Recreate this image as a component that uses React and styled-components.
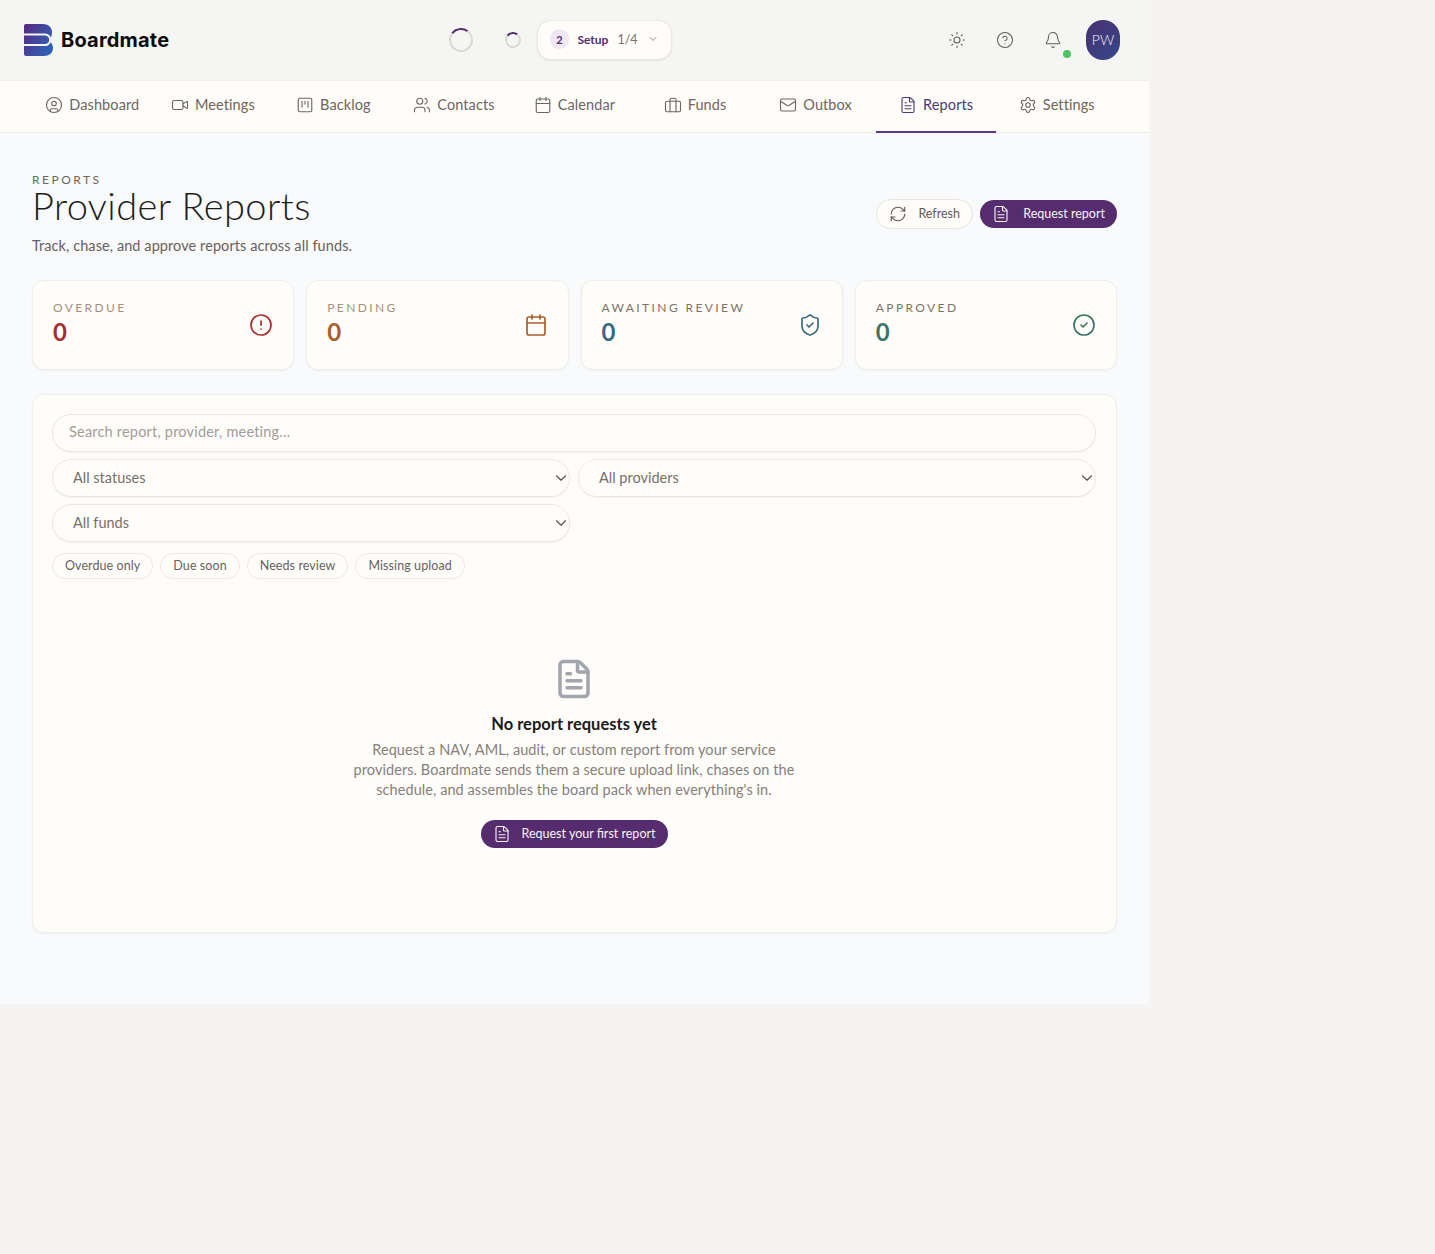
import React from "react";
import styled, { createGlobalStyle } from "styled-components";
import {
  Bell,
  Calendar,
  ChevronDown,
  CircleAlert,
  CircleCheck,
  CircleHelp,
  CircleUser,
  FileText,
  Mail,
  RefreshCw,
  Settings,
  ShieldCheck,
  Sun,
  Users,
  Video,
} from "lucide-react";

const GlobalStyle = createGlobalStyle`
  body {
    margin: 0;
    background: #f5f4f3;
    font-family: "Lato", "Open Sans", sans-serif;
    color: #1f1d1b;
  }
`;

const Shell = styled.div`
  width: 1149px;
  min-height: 1254px;
`;

const Page = styled.div`
  background: #f8fafc;
  height: 1004px;
`;

const Header = styled.header`
  height: 80px;
  box-sizing: border-box;
  background: #f5f5f4;
  display: flex;
  align-items: center;
  justify-content: space-between;
  padding: 0 29px 0 24px;
`;

const Brand = styled.div`
  display: flex;
  align-items: center;
  gap: 8px;
  width: 145px;
  svg {
    flex: none;
  }
`;

const BrandName = styled.span`
  font-family: "Inter", sans-serif;
  font-weight: 700;
  font-size: 20px;
  letter-spacing: 0.2px;
  color: #0b0b0b;
`;

const Center = styled.div`
  display: flex;
  align-items: center;
  margin-left: 14px;
`;

const Spinner = styled.div`
  box-sizing: border-box;
  width: ${(p) => p.$size}px;
  height: ${(p) => p.$size}px;
  margin-right: ${(p) => p.$gap}px;
  border-radius: 50%;
  border: 2px solid #dcd8d3;
  border-top-color: #52306f;
  transform: rotate(-8deg);
`;

const SetupPill = styled.button`
  display: flex;
  align-items: center;
  height: 40px;
  width: 135px;
  box-sizing: border-box;
  padding: 0 12px 2px;
  background: #fffdfa;
  border: 1px solid #ebe8e3;
  border-radius: 14px;
  box-shadow: 0 1px 2px rgba(60, 50, 40, 0.08);
  font: inherit;
`;

const StepBadge = styled.span`
  width: 20px;
  height: 20px;
  border-radius: 50%;
  background: #efe7f4;
  color: #4f2d6b;
  font-size: 11px;
  font-weight: 700;
  display: flex;
  align-items: center;
  justify-content: center;
  margin-right: 8px;
`;

const SetupLabel = styled.span`
  font-size: 12px;
  font-weight: 700;
  color: #4f2d6b;
  margin-right: 9px;
`;

const SetupCount = styled.span`
  font-size: 12.5px;
  color: #77716b;
  margin-right: 9px;
`;

const Tools = styled.div`
  display: flex;
  align-items: center;
  gap: 8px;
`;

const IconButton = styled.div`
  position: relative;
  width: 40px;
  height: 40px;
  display: flex;
  align-items: center;
  justify-content: center;
  color: #5f5b57;
`;

const StatusDot = styled.span`
  position: absolute;
  right: 2px;
  bottom: 2px;
  width: 8px;
  height: 8px;
  border-radius: 50%;
  background: #4fc163;
`;

const Avatar = styled.div`
  width: 34px;
  height: 40px;
  box-sizing: border-box;
  padding-bottom: 2px;
  margin-left: 5px;
  border-radius: 17px;
  background: linear-gradient(135deg, #49306f, #35478b);
  color: #f3f1f6;
  font-size: 14px;
  font-weight: 300;
  display: flex;
  align-items: center;
  justify-content: center;
`;

const Nav = styled.nav`
  height: 53px;
  box-sizing: border-box;
  background: #fffdfa;
  border-top: 1px solid #f0eeea;
  border-bottom: 1px solid #eeece8;
  padding: 0 32px;
  display: grid;
  grid-template-columns: repeat(9, 1fr);
`;

const NavItem = styled.a`
  display: flex;
  align-items: center;
  justify-content: center;
  gap: 6px;
  height: 52px;
  box-sizing: border-box;
  padding-bottom: 2px;
  font-size: 14.5px;
  letter-spacing: 0.1px;
  color: ${(p) => (p.$active ? "#4a3a72" : "#6b6660")};
  border-bottom: 2px solid ${(p) => (p.$active ? "#5b3a80" : "transparent")};
  svg {
    flex: none;
  }
`;

const NavLabel = styled.span`
  padding-bottom: 2px;
`;

const Main = styled.main`
  padding: 40px 32px 0;
`;

const TitleRow = styled.div`
  display: flex;
  align-items: flex-start;
  justify-content: space-between;
  height: 87px;
  margin-bottom: 20px;
`;

const TitleBlock = styled.div`
  display: flex;
  flex-direction: column;
  padding-top: 1px;
`;

const Eyebrow = styled.div`
  font-size: 12px;
  line-height: 12px;
  letter-spacing: 2.5px;
  color: #6b6660;
`;

const Title = styled.h1`
  margin: 0 0 12px;
  font-size: 38px;
  line-height: 38px;
  font-weight: 300;
  letter-spacing: 0.4px;
  color: #1d1c1b;
`;

const Subtitle = styled.div`
  font-size: 14.5px;
  line-height: 20px;
  letter-spacing: 0.08px;
  color: #66615c;
`;

const Actions = styled.div`
  display: flex;
  align-items: center;
  gap: 7px;
  margin-top: 26px;
`;

const OutlineButton = styled.button`
  display: flex;
  align-items: center;
  justify-content: space-between;
  width: 97px;
  height: 30px;
  box-sizing: border-box;
  padding: 0 12px 1px;
  background: #fffdfa;
  border: 1px solid #e8e5e0;
  border-radius: 15px;
  font: inherit;
  font-size: 12.5px;
  color: #5f5a55;
`;

const PrimaryButton = styled.button`
  display: inline-flex;
  align-items: center;
  justify-content: space-between;
  width: ${(p) => p.$width}px;
  height: 28px;
  box-sizing: border-box;
  padding: 0 12px 1px;
  background: #552c6e;
  border: 0;
  border-radius: 14px;
  font: inherit;
  font-size: 12.5px;
  color: #f7f3f8;
`;

const Stats = styled.div`
  display: grid;
  grid-template-columns: repeat(4, 1fr);
  gap: 12px;
  margin-bottom: 24px;
`;

const StatCard = styled.div`
  height: 90px;
  box-sizing: border-box;
  padding: 20px;
  background: #fffdfa;
  border: 1px solid #f0eeea;
  border-radius: 12px;
  box-shadow: 0 1px 2px rgba(60, 50, 40, 0.05);
  display: flex;
  align-items: center;
  justify-content: space-between;
  color: ${(p) => p.$color};
`;

const StatText = styled.div`
  align-self: flex-start;
`;

const StatLabel = styled.div`
  font-size: 12px;
  line-height: 14px;
  letter-spacing: 2.4px;
  color: ${(p) => p.$color};
`;

const StatValue = styled.div`
  margin-top: 1px;
  font-size: 24px;
  line-height: 32px;
  font-weight: 700;
`;

const Panel = styled.section`
  height: 539px;
  box-sizing: border-box;
  padding: 19px 20px 20px 19px;
  background: #fffdfa;
  border: 1px solid #f0eeea;
  border-radius: 12px;
  box-shadow: 0 1px 2px rgba(60, 50, 40, 0.05);
`;

const SearchInput = styled.input`
  display: block;
  width: 100%;
  height: 38px;
  box-sizing: border-box;
  padding: 0 16px 3px;
  margin-bottom: 7px;
  background: #fffdfa;
  border: 1px solid #ece9e5;
  border-radius: 19px;
  box-shadow: 0 1px 1px rgba(60, 50, 40, 0.06);
  font: inherit;
  font-size: 14.5px;
  letter-spacing: 0.2px;
  &::placeholder {
    color: #a19c96;
  }
`;

const Filters = styled.div`
  display: grid;
  grid-template-columns: 1fr 1fr;
  gap: 7px 8px;
  margin-bottom: 11px;
`;

const SelectWrap = styled.div`
  position: relative;
  color: #55504b;
  svg {
    position: absolute;
    right: 0;
    top: 10px;
    pointer-events: none;
  }
`;

const Select = styled.select`
  appearance: none;
  width: 100%;
  height: 38px;
  box-sizing: border-box;
  padding: 0 20px 1px;
  background: #fffdfa;
  border: 1px solid #ece9e5;
  border-radius: 19px;
  box-shadow: 0 1px 1px rgba(60, 50, 40, 0.06);
  font: inherit;
  font-size: 14.5px;
  color: #75706a;
`;

const Chips = styled.div`
  display: flex;
  gap: 7px;
`;

const Chip = styled.button`
  height: 26px;
  box-sizing: border-box;
  padding: 0 12px 2px;
  background: #fffdfa;
  border: 1px solid #ece9e5;
  border-radius: 13px;
  font: inherit;
  font-size: 12.5px;
  letter-spacing: 0.08px;
  color: #66615c;
`;

const Empty = styled.div`
  display: flex;
  flex-direction: column;
  align-items: center;
  padding-top: 79px;
  text-align: center;
`;

const EmptyTitle = styled.div`
  margin-top: 12px;
  font-size: 16.5px;
  line-height: 24px;
  font-weight: 700;
  color: #1c1b1a;
`;

const EmptyText = styled.p`
  margin: 4px 0 20px;
  width: 450px;
  font-size: 14.5px;
  line-height: 20px;
  letter-spacing: 0.07px;
  color: #85807a;
`;

const Logo = () => (
  <svg width="29" height="32" viewBox="0 0 29 32">
    <defs>
      <linearGradient id="logoFill" x1="0" y1="0" x2="1" y2="0.6">
        <stop offset="0" stopColor="#57287f" />
        <stop offset="1" stopColor="#2f62b4" />
      </linearGradient>
    </defs>
    <path
      d="M0 2a2 2 0 0 1 2-2h17c5 0 9 3 9 8 0 3-1 6-3 8 2 2 4 5 4 8 0 5-4 8-9 8H2a2 2 0 0 1-2-2z"
      fill="url(#logoFill)"
    />
    <path d="M0 10.5H21a5.3 5.3 0 0 1 0 10.6H0" fill="none" stroke="#f5f5f4" strokeWidth="2" />
  </svg>
);

const BacklogIcon = ({ size, strokeWidth }) => (
  <svg width={size} height={size} viewBox="0 0 24 24" fill="none" stroke="currentColor" strokeWidth={strokeWidth} strokeLinecap="round" strokeLinejoin="round">
    <rect x="3" y="3" width="18" height="18" rx="2" />
    <path d="M8 7v8M12 7v4M16 7v8" />
  </svg>
);

const FundsIcon = ({ size, strokeWidth }) => (
  <svg width={size} height={size} viewBox="0 0 24 24" fill="none" stroke="currentColor" strokeWidth={strokeWidth} strokeLinecap="round" strokeLinejoin="round">
    <rect x="2" y="7" width="20" height="14" rx="2" />
    <path d="M8 21V5a2 2 0 0 1 2-2h4a2 2 0 0 1 2 2v16" />
  </svg>
);

const navItems = [
  { label: "Dashboard", Icon: CircleUser },
  { label: "Meetings", Icon: Video },
  { label: "Backlog", Icon: BacklogIcon },
  { label: "Contacts", Icon: Users },
  { label: "Calendar", Icon: Calendar },
  { label: "Funds", Icon: FundsIcon },
  { label: "Outbox", Icon: Mail },
  { label: "Reports", Icon: FileText, active: true },
  { label: "Settings", Icon: Settings },
];

const stats = [
  { label: "OVERDUE", color: "#a82e2e", labelColor: "#a58f7e", Icon: CircleAlert },
  { label: "PENDING", color: "#a8612a", labelColor: "#a58f7e", Icon: Calendar },
  { label: "AWAITING REVIEW", color: "#3a6b7c", labelColor: "#7d7269", Icon: ShieldCheck },
  { label: "APPROVED", color: "#3b7568", labelColor: "#7d7269", Icon: CircleCheck },
];

const chips = ["Overdue only", "Due soon", "Needs review", "Missing upload"];

const Dropdown = ({ label }) => (
  <SelectWrap>
    <Select defaultValue={label}>
      <option>{label}</option>
    </Select>
    <ChevronDown size={18} strokeWidth={1.5} />
  </SelectWrap>
);

export default function App() {
  return (
    <Shell>
      <GlobalStyle />
      <Page>
        <Header>
          <Brand>
            <Logo />
            <BrandName>Boardmate</BrandName>
          </Brand>
          <Center>
            <Spinner $size={24} $gap={32} />
            <Spinner $size={16} $gap={16} />
            <SetupPill>
              <StepBadge>2</StepBadge>
              <SetupLabel>Setup</SetupLabel>
              <SetupCount>1/4</SetupCount>
              <ChevronDown size={12} strokeWidth={1.6} color="#77716b" />
            </SetupPill>
          </Center>
          <Tools>
            <IconButton>
              <Sun size={18} strokeWidth={1.4} />
            </IconButton>
            <IconButton>
              <CircleHelp size={18} strokeWidth={1.4} />
            </IconButton>
            <IconButton>
              <Bell size={18} strokeWidth={1.4} />
              <StatusDot />
            </IconButton>
            <Avatar>PW</Avatar>
          </Tools>
        </Header>
        <Nav>
          {navItems.map(({ label, Icon, active }) => (
            <NavItem key={label} $active={active}>
              <Icon size={18} strokeWidth={1.5} />
              <NavLabel>{label}</NavLabel>
            </NavItem>
          ))}
        </Nav>
        <Main>
          <TitleRow>
            <TitleBlock>
              <Eyebrow>REPORTS</Eyebrow>
              <Title>Provider Reports</Title>
              <Subtitle>Track, chase, and approve reports across all funds.</Subtitle>
            </TitleBlock>
            <Actions>
              <OutlineButton>
                <RefreshCw size={18} strokeWidth={1.5} />
                Refresh
              </OutlineButton>
              <PrimaryButton $width={137}>
                <FileText size={18} strokeWidth={1.5} />
                Request report
              </PrimaryButton>
            </Actions>
          </TitleRow>
          <Stats>
            {stats.map(({ label, color, labelColor, Icon }) => (
              <StatCard key={label} $color={color}>
                <StatText>
                  <StatLabel $color={labelColor}>{label}</StatLabel>
                  <StatValue>0</StatValue>
                </StatText>
                <Icon size={24} strokeWidth={1.7} />
              </StatCard>
            ))}
          </Stats>
          <Panel>
            <SearchInput placeholder="Search report, provider, meeting…" />
            <Filters>
              <Dropdown label="All statuses" />
              <Dropdown label="All providers" />
              <Dropdown label="All funds" />
            </Filters>
            <Chips>
              {chips.map((chip) => (
                <Chip key={chip}>{chip}</Chip>
              ))}
            </Chips>
            <Empty>
              <FileText size={42} strokeWidth={2} color="#a2a4ae" />
              <EmptyTitle>No report requests yet</EmptyTitle>
              <EmptyText>
                Request a NAV, AML, audit, or custom report from your service providers. Boardmate
                sends them a secure upload link, chases on the schedule, and assembles the board pack
                when everything's in.
              </EmptyText>
              <PrimaryButton $width={187}>
                <FileText size={18} strokeWidth={1.5} />
                Request your first report
              </PrimaryButton>
            </Empty>
          </Panel>
        </Main>
      </Page>
    </Shell>
  );
}
